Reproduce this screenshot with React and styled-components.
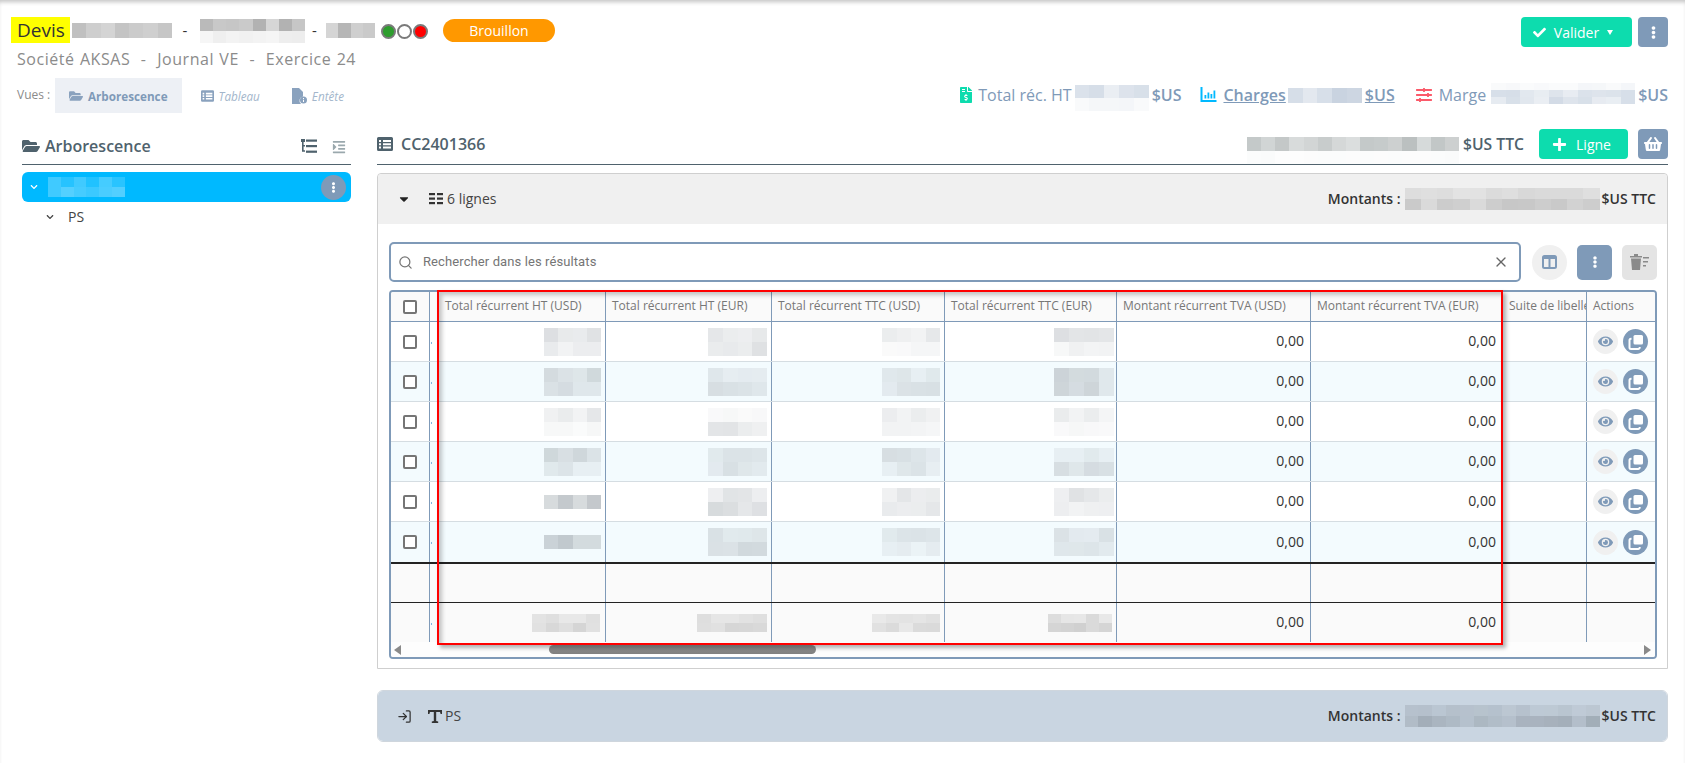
import React from 'react';
import styled, { createGlobalStyle } from 'styled-components';
import {
  FaFolderOpen, FaFileInvoiceDollar, FaCheck, FaEllipsisV, FaPlus,
  FaShoppingBasket, FaEye, FaCaretDown, FaSlidersH, FaIndent, FaChevronDown,
} from 'react-icons/fa';
import { Search, X, LogIn } from 'lucide-react';

const BLUE = '#7f9ab8';
const SLATE = '#4f626d';
const TEAL = '#0ddcae';

const Global = createGlobalStyle`
  html, body { margin: 0; padding: 0; background: #fff; }
  body { font-family: "Open Sans", "Liberation Sans", sans-serif; color: #444; }
  * { box-sizing: border-box; }
`;

const Page = styled.div`
  position: relative;
  height: 763px;
  overflow: hidden;
  padding-right: 17px;
  box-shadow: inset 0 4px 4px -2px rgba(0, 0, 0, 0.24);
`;

/* ---------- pixelated (censored) areas ---------- */
const MosaicBox = styled.div`
  display: grid;
  flex: none;
  width: ${(p) => p.$w}px;
  margin-top: ${(p) => p.$mt || 0}px;
  grid-template-columns: repeat(${(p) => p.$cols}, 1fr);
  grid-auto-rows: ${(p) => p.$ch}px;
`;
const rnd = (n) => {
  const x = Math.sin(n * 127.1 + 11.7) * 43758.5453;
  return x - Math.floor(x);
};
function Mosaic({ w, layers, ch = 14, cw = 14, tint = '170,170,170', seed = 1, mt = 0 }) {
  const cols = Math.max(1, Math.round(w / cw));
  const cells = [];
  layers.forEach((s, r) => {
    for (let c = 0; c < cols; c += 1) {
      const a = s * (0.45 + 0.55 * rnd(seed * 31 + r * 17 + c * 3));
      cells.push(<span key={`${r}-${c}`} style={{ background: `rgba(${tint},${a.toFixed(2)})` }} />);
    }
  });
  return <MosaicBox $w={w} $mt={mt} $cols={cols} $ch={ch}>{cells}</MosaicBox>;
}

/* ---------- header ---------- */
const TopRow = styled.header`
  display: flex;
  justify-content: space-between;
  align-items: flex-start;
  padding: 17px 0 0 11px;
  height: 47px;
`;
const Title = styled.div`
  display: flex;
  align-items: center;
  height: 26px;
`;
const Marked = styled.span`
  background: #ffff00;
  color: #333;
  font-size: 19px;
  line-height: 26px;
  padding: 0 6px;
  width: 59px;
  margin-right: 2px;
`;
const Dash = styled.span`
  width: ${(p) => p.$w}px;
  text-align: center;
  font-size: 15px;
  color: #333;
  margin-left: -1px;
  margin-right: 1px;
`;
const Lights = styled.div`
  display: flex;
  gap: 1px;
  margin: 2px 15px 0 6px;
`;
const Light = styled.i`
  width: 15px;
  height: 15px;
  border-radius: 50%;
  border: 2px solid #7a7a7a;
  background: ${(p) => p.$c};
`;
const Pill = styled.span`
  width: 112px;
  height: 23px;
  margin-top: 1px;
  border-radius: 12px;
  background: #ff9800;
  color: #fff;
  font-size: 14px;
  line-height: 23px;
  text-align: center;
`;
const Actions = styled.div`
  display: flex;
  gap: 6px;
`;
const FillButton = styled.button`
  display: flex;
  align-items: center;
  justify-content: center;
  gap: ${(p) => p.$gap || 0}px;
  border: 0;
  padding: 0 ${(p) => p.$pr || 0}px 0 0;
  width: ${(p) => p.$w}px;
  height: 30px;
  margin-left: ${(p) => p.$ml || 0}px;
  border-radius: 4px;
  background: ${(p) => p.$bg};
  color: #fff;
  font: 400 14px "Open Sans", sans-serif;
`;
const Caret = styled.span`
  width: 0;
  height: 0;
  border-left: 3px solid transparent;
  border-right: 3px solid transparent;
  border-top: 5px solid #fff;
`;
const Subtitle = styled.div`
  height: 24px;
  padding-left: 17px;
  font-size: 16px;
  line-height: 24px;
  letter-spacing: 0.55px;
  word-spacing: 0.6px;
  color: #8b8b8b;
  white-space: pre;
`;
const ViewRow = styled.div`
  display: flex;
  justify-content: space-between;
  align-items: center;
  height: 35px;
  margin-top: 7px;
  padding-left: 17px;
`;
const Tabs = styled.nav`
  display: flex;
  align-items: stretch;
  height: 35px;
`;
const VueLabel = styled.span`
  align-self: center;
  font-size: 12px;
  width: 38px;
  color: #8b8b8b;
  margin-top: -2px;
`;
const Tab = styled.a`
  display: flex;
  align-items: center;
  gap: 5px;
  padding: 0 ${(p) => p.$pad || 14}px;
  font-size: 11.7px;
  font-weight: ${(p) => (p.$on ? 700 : 400)};
  font-style: ${(p) => (p.$on ? 'normal' : 'italic')};
  background: ${(p) => (p.$on ? '#edf0f5' : 'transparent')};
  color: ${(p) => (p.$on ? BLUE : '#a3b6cb')};
  svg { color: #8aa2be; flex: none; }
`;
const Stats = styled.div`
  display: flex;
  align-items: center;
  font-size: 16px;
  color: ${BLUE};
  span, b { padding-bottom: 2px; }
`;
const Stat = styled.div`
  display: flex;
  align-items: center;
  margin-left: ${(p) => p.$ml || 0}px;
  text-decoration: ${(p) => (p.$link ? 'underline' : 'none')};
  font-weight: ${(p) => (p.$link ? 600 : 400)};
`;
const StatIcon = styled.span`
  display: flex;
  margin-right: ${(p) => p.$mr ?? 6}px;
  color: ${(p) => p.$c};
`;
const StatText = styled.span`
  margin-right: ${(p) => p.$mr ?? 4}px;
`;
const Unit = styled.b`
  font-weight: 600;
  margin-left: 3px;
`;

/* ---------- main ---------- */
const Main = styled.main`
  display: grid;
  grid-template-columns: 329px 1fr;
  column-gap: 26px;
  margin-top: 16px;
  padding-left: 22px;
`;
const Heading = styled.div`
  display: flex;
  align-items: center;
  justify-content: space-between;
  height: 36px;
  padding-bottom: ${(p) => p.$pb || 0}px;
  border-bottom: 1px solid ${SLATE};
`;
const HeadTitle = styled.h2`
  display: flex;
  align-items: center;
  gap: ${(p) => p.$gap}px;
  margin: 0;
  font-size: 16px;
  font-weight: 600;
  color: ${SLATE};
  padding-bottom: ${(p) => p.$pb || 0}px;
`;
const HeadTools = styled.div`
  display: flex;
  align-items: center;
  gap: 15px;
  margin-right: 5px;
`;
const TreeRow = styled.div`
  display: flex;
  align-items: center;
  height: 30px;
  padding-left: ${(p) => p.$indent}px;
  font-size: 14px;
  color: #444;
  ${(p) => p.$on && `background: #00b9ff; border-radius: 6px; color: #fff; margin-top: 7px;`}
`;
const Chevron = styled(FaChevronDown)`
  flex: none;
  width: 8px;
  height: 8px;
  margin-right: ${(p) => p.$mr}px;
`;
const TreeLabel = styled.span`
  padding-bottom: 2px;
`;
const RoundBtn = styled.span`
  display: flex;
  align-items: center;
  justify-content: center;
  width: ${(p) => p.$d}px;
  height: ${(p) => p.$d}px;
  flex: none;
  border-radius: 50%;
  background: ${(p) => p.$bg};
  color: ${(p) => p.$fg};
  margin-left: ${(p) => (p.$auto ? 'auto' : '0')};
  margin-right: ${(p) => p.$mr || 0}px;
`;
const HeadRight = styled.div`
  display: flex;
  align-items: center;
  font-size: 15.7px;
  font-weight: 600;
  color: ${SLATE};
`;
const HeadUnit = styled.span`
  margin: 0 15px 0 4px;
`;
const Card = styled.section`
  margin-top: 8px;
  border: 1px solid #cfcfcf;
  border-radius: 4px 4px 0 0;
  height: 496px;
`;
const CardBar = styled.div`
  display: flex;
  align-items: center;
  justify-content: space-between;
  height: ${(p) => p.$h}px;
  padding: 0 11px 0 19px;
  background: ${(p) => p.$bg};
  border-radius: 4px 4px 0 0;
`;
const BarLeft = styled.div`
  display: flex;
  align-items: center;
  font-size: 14px;
  color: #444;
`;
const BarIcon = styled.span`
  display: flex;
  margin: 0 ${(p) => p.$mr}px 0 ${(p) => p.$ml}px;
`;
const BarText = styled.span`
  padding-bottom: 2px;
`;
const Amount = styled.div`
  display: flex;
  align-items: center;
  font-size: 14px;
  font-weight: 600;
  color: #333;
`;
const AmountValue = styled.span`
  margin: 0 2px 0 4px;
`;
const CardBody = styled.div`
  padding: 18px 10px 0 11px;
`;
const Tools = styled.div`
  display: flex;
  align-items: center;
  height: 40px;
  gap: 10px;
`;
const SearchBox = styled.label`
  display: flex;
  align-items: center;
  width: 1132px;
  height: 40px;
  margin-right: 1px;
  padding: 0 10px 0 7px;
  border: 2px solid ${BLUE};
  border-radius: 5px;
  color: #757575;
  font: 13px Roboto, sans-serif;
  letter-spacing: 0.1px;
  span { margin-left: 10px; flex: 1; padding-bottom: 2px; }
`;
const SquareBtn = styled.span`
  display: flex;
  align-items: center;
  justify-content: center;
  width: 35px;
  height: 35px;
  border-radius: 5px;
  background: ${(p) => p.$bg};
  color: ${(p) => p.$fg};
`;

/* ---------- table ---------- */
const TableArea = styled.div`
  position: relative;
  margin-top: 8px;
`;
const Table = styled.div`
  border: 2px solid ${BLUE};
  border-radius: 4px;
  overflow: hidden;
`;
const Row = styled.div`
  display: grid;
  grid-template-columns: 39px 176px 166px 173px 172px 194px 192px 84px 68px;
  height: ${(p) => p.$h}px;
  background: ${(p) => p.$bg};
  border-bottom: ${(p) => p.$line};
  border-top: ${(p) => p.$top || '0'};
`;
const Cell = styled.div`
  position: relative;
  display: flex;
  align-items: center;
  justify-content: ${(p) => (p.$right ? 'flex-end' : p.$center ? 'center' : 'flex-start')};
  padding: 0 ${(p) => (p.$pr ?? (p.$right ? 6 : 0))}px 0 ${(p) => (p.$pl ?? 0)}px;
  border-right: ${(p) => (p.$last ? '0' : `1px solid ${BLUE}`)};
  font-size: 14px;
  color: #333;
  overflow: ${(p) => (p.$clip ? 'hidden' : 'visible')};
  white-space: nowrap;
`;
const CellText = styled.span`
  padding-bottom: 2px;
`;
const HeadCell = styled(Cell)`
  font-size: 12px;
  color: #777;
`;
const Sliver = styled.i`
  position: absolute;
  left: 1px;
  top: 50%;
  width: 1px;
  height: 2px;
  background: #7fb4e0;
`;
const Check = styled.i`
  width: 14px;
  height: 14px;
  border: 2px solid #757575;
  border-radius: 2px;
  background: #fff;
`;
const RowActions = styled.div`
  display: flex;
  gap: 5px;
  padding-left: 6px;
`;
const ScrollTrack = styled.div`
  display: flex;
  align-items: center;
  height: 15px;
  background: #fdfdfd;
`;
const Arrow = styled.i`
  width: 0;
  height: 0;
  margin: ${(p) => (p.$right ? '0 4px 0 auto' : '0 0 0 3px')};
  border-top: 5px solid transparent;
  border-bottom: 5px solid transparent;
  ${(p) => (p.$right ? 'border-left: 7px solid #8a8a8a;' : 'border-right: 7px solid #8a8a8a;')}
`;
const Thumb = styled.div`
  width: 267px;
  height: 9px;
  margin-left: 148px;
  border-radius: 5px;
  background: linear-gradient(#939393, #7f7f7f);
`;
const RedFrame = styled.div`
  position: absolute;
  left: 48px;
  top: 0;
  width: 1066px;
  height: 355px;
  border: 2.5px solid #ff0000;
  pointer-events: none;
  box-shadow: 3px 3px 4px rgba(0, 0, 0, 0.3), inset 3px 3px 4px rgba(0, 0, 0, 0.22);
`;
const NextCard = styled.section`
  margin-top: 21px;
  height: 52px;
  border: 1px solid #cfd6dd;
  border-radius: 6px;
  overflow: hidden;
`;

/* ---------- drawn icons ---------- */
const ListTableIcon = ({ w, h, c }) => (
  <svg width={w} height={h} viewBox="0 0 16 14" fill={c}>
    <path
      fillRule="evenodd"
      d="M1.5 0h13A1.5 1.5 0 0 1 16 1.5v11a1.5 1.5 0 0 1-1.5 1.5h-13A1.5 1.5 0 0 1 0 12.5v-11A1.5 1.5 0 0 1 1.5 0zM2 3v2h2V3zM6 3v2h8V3zM2 6.2v2h2v-2zM6 6.2v2h8v-2zM2 9.4v2h2v-2zM6 9.4v2h8v-2z"
    />
  </svg>
);
const TreeIcon = () => (
  <svg width="16" height="15" viewBox="0 0 16 15" fill={SLATE}>
    <path d="M0 0h4v3H2.6v3H4v1.6H2.6v3.6H4v1.6H1V3H0z" />
    <rect x="5" y="0.5" width="11" height="2.2" />
    <rect x="5" y="6" width="11" height="2.2" />
    <rect x="5" y="11.6" width="11" height="2.2" />
  </svg>
);
const RowsIcon = () => (
  <svg width="14" height="13" viewBox="0 0 14 13" fill="#333">
    {[0, 4.5, 9].map((y) => (
      <g key={y}>
        <rect x="0" y={y} width="6" height="2.2" />
        <rect x="8" y={y} width="6" height="2.2" />
      </g>
    ))}
  </svg>
);
const ColumnsIcon = () => (
  <svg width="15" height="14" viewBox="0 0 15 14" fill="none" stroke={BLUE} strokeWidth="2">
    <rect x="1" y="1" width="13" height="12" rx="1.5" />
    <path d="M7.5 2v11M1 3h13" />
  </svg>
);
const TrashIcon = () => (
  <svg width="20" height="16" viewBox="0 0 20 16" fill="#8a8a8a">
    <path d="M0 2h12v1.6H0zM4 0h4v2H4zM1 4.5h10L10 16H2z" />
    <path d="M13 3h6v1.6h-6zM13 7h5v1.6h-5zM13 11h3v1.6h-3z" />
  </svg>
);
const InfoDocIcon = () => (
  <svg width="15" height="16" viewBox="0 0 15 16" fill="#8aa2be">
    <path d="M0 0h7l4 4v4.5a4.3 4.3 0 0 0-2 7.5H0z" />
    <circle cx="11.5" cy="12" r="3.5" />
    <path d="M11 10h1v1h-1zM11 11.7h1V14h-1z" fill="#fff" />
  </svg>
);
const ChartIcon = () => (
  <svg width="17" height="15" viewBox="0 0 16 15" fill="#00b9ff">
    <path d="M0 0h2v13H16v2H0z" />
    <path d="M4 8h1.8v3.5H4zM7 5.5h1.8v6H7zM10 7h1.8v4.5H10zM13 3.5h1.8v8H13z" />
  </svg>
);
const TitleT = () => (
  <svg width="14" height="13" viewBox="0 0 14 13" fill="#333">
    <path d="M0 0h14v4h-1.4L12 2H8.2v9l2 .6V13H3.8v-1.4l2-.6V2H2l-.6 2H0z" />
  </svg>
);
const CopyIcon = () => (
  <svg width="16" height="16" viewBox="0 0 16 16">
    <rect x="5.5" y="1" width="9.5" height="9.5" rx="1.5" fill="#fff" />
    <path d="M3.5 4.8H3A1.5 1.5 0 0 0 1.5 6.3v7.2A1.5 1.5 0 0 0 3 15h7.2a1.5 1.5 0 0 0 1.5-1.5V13" stroke="#fff" strokeWidth="2" fill="none" />
  </svg>
);

const ROWS = [
  [[.5, .25], [.35, .4], [.3, .12], [.45, .2]],
  [[.5, .55], [.25, .5], [.3, .35], [.5, .5]],
  [[.3, .1], [.12, .35], [.25, .15], [.25, .1]],
  [[.55, .3], [.3, .4], [.4, .3], [.3, .4]],
  [[.75], [.35, .45], [.35, .3], [.4, .25]],
  [[.7], [.35, .45], [.4, .2], [.35, .3]],
];
const MOSAIC_W = [57, 59, 58, 60];
const LABELS = [
  'Total récurrent HT (USD)', 'Total récurrent HT (EUR)', 'Total récurrent TTC (USD)',
  'Total récurrent TTC (EUR)', 'Montant récurrent TVA (USD)', 'Montant récurrent TVA (EUR)',
];

function DataRow({ index }) {
  const alt = index % 2 === 1;
  return (
    <Row $h={40} $bg={alt ? '#f3fbfe' : '#fff'} $line={index === 5 ? '0' : '1px solid #d5dde2'}>
      <Cell $center><Check /></Cell>
      {[0, 1, 2, 3].map((c) => (
        <Cell key={c} $right $pr={c === 3 ? 2 : 4}>
          {c === 0 && <Sliver />}
          <Mosaic w={MOSAIC_W[c]} layers={ROWS[index][c]} cw={14} ch={14} seed={index * 7 + c + 2} tint="165,172,178" />
        </Cell>
      ))}
      <Cell $right><CellText>0,00</CellText></Cell>
      <Cell $right><CellText>0,00</CellText></Cell>
      <Cell />
      <Cell $last>
        <RowActions>
          <RoundBtn $d={25} $bg="#f0f0f0" $fg={BLUE}><FaEye size={15} /></RoundBtn>
          <RoundBtn $d={25} $bg={BLUE} $fg="#fff"><CopyIcon /></RoundBtn>
        </RowActions>
      </Cell>
    </Row>
  );
}

export default function App() {
  return (
    <Page>
      <Global />
      <TopRow>
        <Title>
          <Marked>Devis</Marked>
          <Mosaic w={100} layers={[.85]} ch={15} seed={3} tint="165,165,165" />
          <Dash $w={28}>-</Dash>
          <Mosaic w={105} layers={[.85, .2]} ch={12} mt={2} seed={5} tint="160,160,160" />
          <Dash $w={21}>-</Dash>
          <Mosaic w={49} layers={[.85]} ch={15} seed={7} tint="160,160,160" />
          <Lights>
            <Light $c="#2e9e2e" />
            <Light $c="#fff" />
            <Light $c="#f00" />
          </Lights>
          <Pill>Brouillon</Pill>
        </Title>
        <Actions>
          <FillButton $w={111} $bg={TEAL} $pr={7} $gap={8}>
            <FaCheck size={13} />Valider<Caret />
          </FillButton>
          <FillButton $w={30} $bg={BLUE}><FaEllipsisV size={13} /></FillButton>
        </Actions>
      </TopRow>
      <Subtitle>Société AKSAS  -  Journal VE  -  Exercice 24</Subtitle>
      <ViewRow>
        <Tabs>
          <VueLabel>Vues :</VueLabel>
          <Tab $on><FaFolderOpen size={14} />Arborescence</Tab>
          <Tab $pad={19}><ListTableIcon w={13} h={12} c="#8aa2be" />Tableau</Tab>
          <Tab $pad={13}><InfoDocIcon />Entête</Tab>
        </Tabs>
        <Stats>
          <Stat>
            <StatIcon $c={TEAL} $mr={4}><FaFileInvoiceDollar size={16} /></StatIcon>
            <StatText $mr={3}>Total réc. HT</StatText>
            <Mosaic w={74} layers={[.5, .12]} ch={13} cw={14} mt={5} seed={11} tint="165,182,204" />
            <Unit>$US</Unit>
          </Stat>
          <Stat $ml={19} $link>
            <StatIcon $c="#00b9ff"><ChartIcon /></StatIcon>
            <StatText $mr={2}>Charges</StatText>
            <Mosaic w={74} layers={[.6]} ch={15} cw={14} seed={13} tint="165,182,204" />
            <Unit>$US</Unit>
          </Stat>
          <Stat $ml={21}>
            <StatIcon $c="#fb5a6a" $mr={7}><FaSlidersH size={16} /></StatIcon>
            <StatText $mr={5}>Marge</StatText>
            <Mosaic w={144} layers={[.12, .5, .5]} ch={7} cw={14} mt={-4} seed={17} tint="165,182,204" />
            <Unit>$US</Unit>
          </Stat>
        </Stats>
      </ViewRow>
      <Main>
        <aside>
          <Heading>
            <HeadTitle $gap={5} $pb={2}><FaFolderOpen size={18} />Arborescence</HeadTitle>
            <HeadTools>
              <TreeIcon />
              <FaIndent size={14} color="#9aa8ad" />
            </HeadTools>
          </Heading>
          <TreeRow $on $indent={8}>
            <Chevron $mr={10} />
            <Mosaic w={77} layers={[.28, .34]} ch={10} cw={14} seed={19} tint="255,255,255" />
            <RoundBtn $auto $d={25} $mr={5} $bg={BLUE} $fg="#fff"><FaEllipsisV size={11} /></RoundBtn>
          </TreeRow>
          <TreeRow $indent={24}>
            <Chevron $mr={14} /><TreeLabel>PS</TreeLabel>
          </TreeRow>
        </aside>
        <div>
          <Heading $pb={5}>
            <HeadTitle $gap={8}><ListTableIcon w={16} h={14} c={SLATE} />CC2401366</HeadTitle>
            <HeadRight>
              <Mosaic w={212} layers={[.8, .05]} ch={14} cw={14} mt={14} seed={23} tint="165,172,172" />
              <HeadUnit>$US TTC</HeadUnit>
              <FillButton $w={89} $bg={TEAL} $gap={9} $pr={4}><FaPlus size={15} />Ligne</FillButton>
              <FillButton $w={30} $bg={BLUE} $ml={10}><FaShoppingBasket size={18} /></FillButton>
            </HeadRight>
          </Heading>
          <Card>
            <CardBar $h={50} $bg="#f0f0f0">
              <BarLeft>
                <FaCaretDown size={14} color="#222" />
                <BarIcon $ml={18} $mr={4}><RowsIcon /></BarIcon>
                <BarText>6 lignes</BarText>
              </BarLeft>
              <Amount>
                <BarText>Montants :</BarText>
                <AmountValue>
                  <Mosaic w={195} layers={[.35, .65]} ch={11} cw={16} seed={29} tint="170,170,170" />
                </AmountValue>
                <BarText>$US TTC</BarText>
              </Amount>
            </CardBar>
            <CardBody>
              <Tools>
                <SearchBox>
                  <Search size={15} color="#757575" />
                  <span>Rechercher dans les résultats</span>
                  <X size={16} color="#666" />
                </SearchBox>
                <RoundBtn $d={35} $bg="#f0f0f0"><ColumnsIcon /></RoundBtn>
                <SquareBtn $bg={BLUE} $fg="#fff"><FaEllipsisV size={12} /></SquareBtn>
                <SquareBtn $bg="#e4e4e4"><TrashIcon /></SquareBtn>
              </Tools>
              <TableArea>
                <Table>
                  <Row $h={30} $bg="#fafafa" $line={`1px solid ${BLUE}`}>
                    <HeadCell $center><Check /></HeadCell>
                    {LABELS.map((l) => (
                      <HeadCell key={l} $pl={l === LABELS[0] ? 15 : 6}><CellText>{l}</CellText></HeadCell>
                    ))}
                    <HeadCell $pl={6} $clip><CellText>Suite de libellé</CellText></HeadCell>
                    <HeadCell $pl={6} $last><CellText>Actions</CellText></HeadCell>
                  </Row>
                  {[0, 1, 2, 3, 4, 5].map((i) => <DataRow key={i} index={i} />)}
                  <Row $h={41} $bg="#fafafa" $line="1px solid #222" $top="2px solid #222">
                    {Array.from({ length: 9 }, (_, i) => <Cell key={i} $last={i === 8} />)}
                  </Row>
                  <Row $h={39} $bg="#fafafa" $line="0">
                    <Cell />
                    {[[.4, .5], [.4, .5], [.4, .45], [.45, .6]].map((l, i) => (
                      <Cell key={i} $right $pr={[5, 4, 4, 4][i]}>
                        {i === 0 && <Sliver />}
                        <Mosaic w={[68, 70, 68, 64][i]} layers={l} ch={9} cw={14} seed={37 + i} tint="175,175,175" />
                      </Cell>
                    ))}
                    <Cell $right><CellText>0,00</CellText></Cell>
                    <Cell $right><CellText>0,00</CellText></Cell>
                    <Cell />
                    <Cell $last />
                  </Row>
                  <ScrollTrack>
                    <Arrow />
                    <Thumb />
                    <Arrow $right />
                  </ScrollTrack>
                </Table>
                <RedFrame />
              </TableArea>
            </CardBody>
          </Card>
          <NextCard>
            <CardBar $h={50} $bg="#c9d5e1">
              <BarLeft>
                <LogIn size={15} color="#333" />
                <BarIcon $ml={16} $mr={3}><TitleT /></BarIcon>
                <BarText>PS</BarText>
              </BarLeft>
              <Amount>
                <BarText>Montants :</BarText>
                <AmountValue>
                  <Mosaic w={195} layers={[.35, .65]} ch={11} cw={14} seed={41} tint="140,150,160" />
                </AmountValue>
                <BarText>$US TTC</BarText>
              </Amount>
            </CardBar>
          </NextCard>
        </div>
      </Main>
    </Page>
  );
}
